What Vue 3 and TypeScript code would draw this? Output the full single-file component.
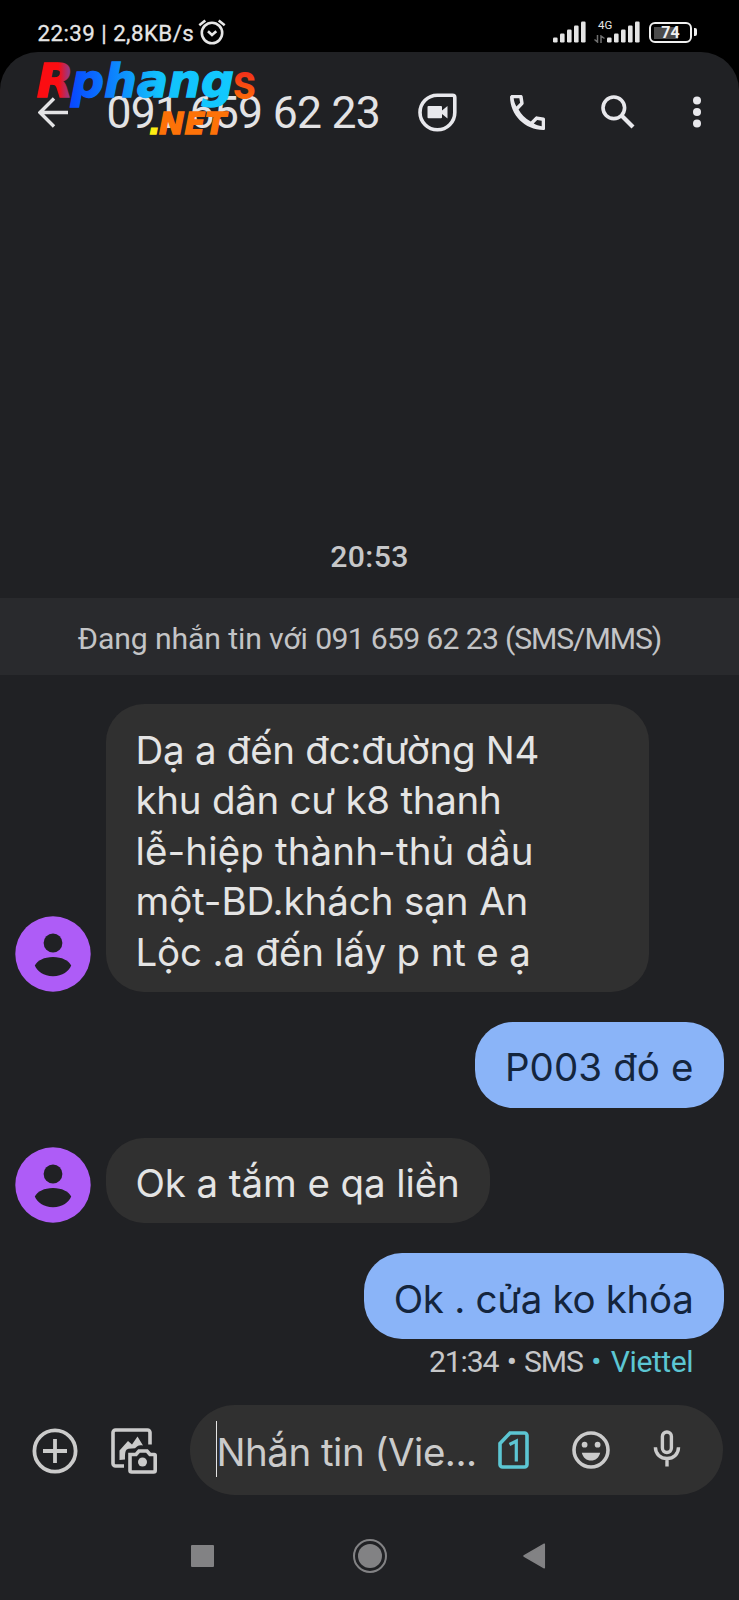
<script setup lang="ts">
interface Message {
  id: number
  from: 'them' | 'me'
  lines: { text: string; spacing: string }[]
}

const contact = '091 659 62 23'

const messages: Message[] = [
  {
    id: 1,
    from: 'them',
    lines: [
      { text: 'Dạ a đến đc:đường N4', spacing: 's1' },
      { text: 'khu dân cư k8 thanh', spacing: 's1' },
      { text: 'lễ-hiệp thành-thủ dầu', spacing: 's2' },
      { text: 'một-BD.khách sạn An', spacing: 's3' },
      { text: 'Lộc .a đến lấy p nt e ạ', spacing: 's4' },
    ],
  },
  { id: 2, from: 'me', lines: [{ text: 'P003 đó e', spacing: 's5' }] },
  { id: 3, from: 'them', lines: [{ text: 'Ok a tắm e qa liền', spacing: 's3' }] },
  { id: 4, from: 'me', lines: [{ text: 'Ok . cửa ko khóa', spacing: 's6' }] },
]

const bars = [0, 1, 2, 3, 4]
</script>

<template>
  <div class="phone">
    <header class="status">
      <span class="clock">22:39 | 2,8KB/s</span>
      <svg class="alarm" width="28" height="26" viewBox="0 0 28 26" fill="none" stroke="#e6e6e6" stroke-width="2.6">
        <circle cx="14" cy="14" r="10.2" />
        <path d="M1.3 6.3 7.3 1.6M26.7 6.3 20.7 1.6M10 12.3l4 3.7 4.3-3.7" />
      </svg>
      <svg class="signal" width="33" height="22" viewBox="0 0 33 22" fill="#e4e4e4">
        <rect v-for="b in bars" :key="b" :x="b * 7" :y="16.5 - b * 4" width="4.6" :height="5 + b * 4" rx="1.2" />
      </svg>
      <div class="network">
        <span>4G</span>
        <svg width="11" height="8" viewBox="0 0 11 8" fill="none" stroke="#6f6f6f" stroke-width="1.5">
          <path d="M.5 4.5 3.5 7V0M10.5 3.5 7 1v7" />
        </svg>
      </div>
      <svg class="signal-2" width="33" height="22" viewBox="0 0 33 22" fill="#e4e4e4">
        <rect v-for="b in bars" :key="b" :x="b * 7" :y="16.5 - b * 4" width="4.6" :height="5 + b * 4" rx="1.2" />
      </svg>
      <div class="battery"><span>74</span></div>
    </header>

    <main class="app">
      <nav class="toolbar">
        <svg class="back" width="31" height="31" viewBox="0 0 31 31" fill="none" stroke="#e3e3e5" stroke-width="3.4">
          <path d="M30 15.5H3M16 1.5l-14 14 14 14" />
        </svg>
        <h1>{{ contact }}</h1>
        <svg class="duo" width="39" height="39" viewBox="0 0 39 39">
          <path d="M19.3 2.2H34.5a2.3 2.3 0 0 1 2.3 2.3V19.5A17.4 17.3 0 1 1 19.3 2.2Z" fill="none" stroke="#e8e8ec" stroke-width="3.6" />
          <path d="M10.5 13h12.5a1 1 0 0 1 1 1v3.500l5.500-4.500v12.500L24 21v3.300a1 1 0 0 1-1 1h-12.500a1 1 0 0 1-1-1V14a1 1 0 0 1 1-1Z" fill="#e8e8ec" />
        </svg>
        <svg class="call" width="35" height="35" viewBox="3 3 18 18" fill="#e8e8ec">
          <path fill-rule="evenodd" d="M3.700 3H8.600C9.100 3 9.400 3.300 9.500 3.700L10 7C10.100 7.400 10 7.700 9.700 8L7.400 10.400A15 15 0 0 0 13.700 16.600L16 14.300C16.300 14 16.600 13.900 17 14L20.300 14.600C20.700 14.700 21 15 21 15.500V20.200C21 20.700 20.700 21 20.200 21C10.700 21 3 13.300 3 3.800ZM4.900 4.700C5 6.200 5.700 8 6.300 8.900L8.200 7L7.800 4.700ZM15.200 17.700C16.500 18.400 17.800 18.900 19.300 19.100V16.200L17 15.800Z" />
        </svg>
        <svg class="search" width="34" height="34" viewBox="0 0 34 34" fill="none" stroke="#e8e8ec" stroke-width="3.6">
          <circle cx="12.8" cy="12.8" r="10.8" />
          <path d="M20.5 20.5 32 32" stroke-width="4.2" />
        </svg>
        <svg class="more" width="10" height="32" viewBox="0 0 10 32" fill="#e8e8ec">
          <circle cx="5" cy="4.5" r="4" />
          <circle cx="5" cy="16" r="4" />
          <circle cx="5" cy="27.5" r="4" />
        </svg>
      </nav>

      <time class="day">20:53</time>
      <p class="banner">
        <span class="lead">Đang nhắn tin với&#32;</span><span class="number">{{ contact + ' ' }}</span><span class="kind">(SMS/MMS)</span>
      </p>

      <section class="thread">
        <article v-for="m in messages" :key="m.id" :class="['row', m.from]">
          <svg v-if="m.from === 'them'" class="avatar" width="76" height="76" viewBox="0 0 76 76">
            <circle cx="38" cy="38" r="37.7" fill="#ae5cf7" />
            <circle cx="38" cy="27" r="9.4" fill="#202124" />
            <path d="M19.8 49.5C22.5 44.5 29 41 38 41s15.5 3.5 18.2 8.5C54 55 47.5 60.2 38 60.2S22 55 19.8 49.5Z" fill="#202124" />
          </svg>
          <div class="bubble">
            <p v-for="l in m.lines" :key="l.text" :class="l.spacing">{{ l.text }}</p>
          </div>
        </article>
        <p class="meta">21:34 • SMS <span>• Viettel</span></p>
      </section>

      <section class="compose">
        <svg class="plus" width="46" height="46" viewBox="0 0 46 46" fill="none" stroke="#cbcbcb" stroke-width="3.8">
          <circle cx="23" cy="23" r="20.6" />
          <path d="M23 11v24M11 23h24" />
        </svg>
        <svg class="gallery" width="46" height="46" viewBox="0 0 46 46" fill="none" stroke="#cbcbcb" stroke-width="3.6">
          <path d="M13 38H4.500A2.500 2.500 0 0 1 2 35.500V4.500A2.500 2.500 0 0 1 4.500 2h32A2.500 2.500 0 0 1 39 4.500V16.500" />
          <path d="M8.500 32V22.500L17 13l4 3.500L26.500 8.500 32 17.500C27 16.500 26 19 24 20.200L17.500 20.700C14 21.500 14 25 14 31.500Z" fill="#cbcbcb" stroke="none" />
          <path d="M19 26.500h6l3-3.500h8l3 3.500h4.200a1 1 0 0 1 1 1V42.500a1.500 1.500 0 0 1-1.500 1.500H20.500a1.500 1.500 0 0 1-1.500-1.500Z" />
          <circle cx="31.5" cy="34" r="4.5" fill="#cbcbcb" stroke="none" />
        </svg>
        <div class="field">
          <i class="caret" />
          <span class="hint">Nhắn tin (Vie...</span>
          <svg class="sim" width="31" height="38" viewBox="0 0 31 38" fill="none" stroke="#5cc6d3" stroke-width="3.6">
            <path d="M12 2H26.500A2.500 2.500 0 0 1 29 4.500V33.500A2.500 2.500 0 0 1 26.500 36H4.500A2.500 2.500 0 0 1 2 33.500V12.500Z" />
            <path d="M11.500 13.500 18.300 10V30.500" stroke-width="3.2" />
          </svg>
          <svg class="emoji" width="38" height="38" viewBox="0 0 38 38" fill="#cbcbcb">
            <circle cx="19" cy="19" r="17" fill="none" stroke="#cbcbcb" stroke-width="3.6" />
            <circle cx="12.6" cy="13.7" r="2.9" />
            <circle cx="25.6" cy="13.7" r="2.9" />
            <path d="M9.800 21.800H28.200C27 26.800 23.500 29.600 19 29.600S11 26.800 9.800 21.800Z" />
          </svg>
          <svg class="mic" width="28" height="37" viewBox="0 0 28 37" fill="none" stroke="#cbcbcb" stroke-width="3.4">
            <rect x="9.4" y="2" width="9" height="20.5" rx="4.5" />
            <path d="M2.400 17.200C2.400 24 7.500 28.500 14 28.500S25.500 24 25.500 17.200M14 28.500V36.500" />
          </svg>
        </div>
      </section>

      <footer class="nav" aria-label="Navigation">
        <i class="recents" />
        <i class="home"><i /></i>
        <svg width="24" height="28" viewBox="0 0 24 28">
          <path d="M2 14 22.300 2.200V25.800Z" fill="#828284" stroke="#828284" stroke-width="1.5" stroke-linejoin="round" />
        </svg>
      </footer>
    </main>

    <svg class="watermark" width="230" height="90" viewBox="30 50 230 90">
      <defs>
        <linearGradient id="red" x1="0" x2="1">
          <stop offset=".6" stop-color="#fb0d12" />
          <stop offset="1" stop-color="#6a4cb8" />
        </linearGradient>
        <linearGradient id="blue" x1="0" x2="1">
          <stop offset="0" stop-color="#0748ff" />
          <stop offset=".55" stop-color="#12c3fb" />
          <stop offset="1" stop-color="#12c9ff" />
        </linearGradient>
        <linearGradient id="ember" x1="0" x2="0" y1="0" y2="1">
          <stop offset=".3" stop-color="#f02a1c" />
          <stop offset=".8" stop-color="#ff6a08" />
        </linearGradient>
      </defs>
      <g class="brand">
        <text x="36.5" y="96.5" textLength="37" lengthAdjust="spacingAndGlyphs" fill="url(#red)" stroke="url(#red)">R</text>
        <text x="71" y="96.5" textLength="163" lengthAdjust="spacingAndGlyphs" fill="url(#blue)" stroke="url(#blue)">phang</text>
        <text class="tail" x="233" y="98.5" textLength="23" lengthAdjust="spacingAndGlyphs" fill="url(#ember)">s</text>
        <text class="dot" x="149" y="133.5" fill="#ffee12" stroke="#ffee12">.</text>
        <text class="net" x="159" y="133.5" textLength="67" lengthAdjust="spacingAndGlyphs" fill="#fd7208" stroke="#fd7208">NET</text>
      </g>
    </svg>
  </div>
</template>

<style>
body {
  margin: 0;
  background: #000;
}
</style>

<style scoped>
.phone {
  position: relative;
  width: 739px;
  height: 1600px;
  overflow: hidden;
  background: #000;
  font-family: Roboto, "Noto Sans", sans-serif;
}

p,
h1 {
  margin: 0;
  font-weight: 400;
  white-space: nowrap;
}

svg {
  display: block;
  flex: none;
}

.status {
  display: flex;
  height: 52px;
  box-sizing: border-box;
  padding-top: 12px;
  align-items: center;
  color: #e6e6e6;
}

.clock {
  width: 160.5px;
  margin-left: 37.5px;
  padding-top: 2px;
  font-size: 22.3px;
  letter-spacing: 0.45px;
  white-space: nowrap;
  -webkit-text-stroke: 0.3px #e6e6e6;
}

.alarm {
  margin-bottom: 1px;
}

.signal {
  margin-left: 327px;
}

.network {
  display: flex;
  flex-direction: column;
  width: 17px;
  margin: 0 0 3px 8px;
  gap: 4px;
}

.network span {
  padding-left: 4px;
  font-size: 11.5px;
  line-height: 12px;
}

.signal-2 {
  margin-left: -4px;
}

.battery {
  position: relative;
  display: flex;
  width: 43px;
  height: 21px;
  margin: 1px 0 0 9px;
  box-sizing: border-box;
  align-items: center;
  justify-content: center;
  border: 2.5px solid #f0f0f0;
  border-radius: 6px;
  background: linear-gradient(#4b4b4b, #4b4b4b) 3px 50% / 24px 12px no-repeat;
  color: #f0f0f0;
  font-size: 16px;
  font-weight: 700;
}

.battery::after {
  content: "";
  position: absolute;
  top: 4px;
  right: -6.5px;
  width: 3px;
  height: 8px;
  border-radius: 0 2px 2px 0;
  background: #f0f0f0;
}

.app {
  display: flex;
  flex-direction: column;
  height: 1548px;
  border-radius: 38px 38px 0 0;
  background: #202124;
}

.toolbar {
  display: flex;
  height: 120px;
  align-items: center;
}

.back {
  margin-left: 38px;
}

.toolbar h1 {
  width: 273px;
  margin-left: 37.5px;
  padding-top: 1px;
  color: #e3e3e5;
  font-size: 44.5px;
  letter-spacing: -0.75px;
  line-height: 56px;
}

.duo {
  margin-left: 38px;
}

.call {
  margin-left: 53px;
}

.search {
  margin-left: 56px;
}

.more {
  margin-left: 57px;
}

.day {
  margin-top: 367px;
  color: #c6c7c9;
  font-size: 30.2px;
  font-weight: 500;
  letter-spacing: 0.4px;
  line-height: 36px;
  text-align: center;
}

.banner {
  height: 77px;
  margin-top: 23px;
  background: #292a2d;
  color: #c3c4c6;
  font-size: 30.2px;
  line-height: 81px;
  text-align: center;
}

.lead {
  letter-spacing: -0.12px;
}

.number {
  letter-spacing: -0.7px;
}

.kind {
  letter-spacing: -1.1px;
}

.thread {
  display: flex;
  flex-direction: column;
  gap: 30px;
  padding: 29px 15px 0;
}

.row {
  display: flex;
  align-items: flex-end;
  gap: 14.5px;
}

.row.me {
  justify-content: flex-end;
}

.bubble {
  box-sizing: border-box;
  min-height: 85.7px;
  padding: 20.5px 30px 14.5px 30px;
  border-radius: 38px;
  background: #303030;
  color: #e4e4e4;
  font-family: Inter, "Noto Sans", sans-serif;
  font-size: 38.5px;
  line-height: 50.6px;
}

.me .bubble {
  padding-right: 30.5px;
  background: #8ab4f8;
  color: #14253d;
}

.them:first-child .bubble {
  width: 543px;
}

.s1 {
  letter-spacing: -0.27px;
}

.s2 {
  letter-spacing: 0.13px;
}

.s3 {
  letter-spacing: -0.1px;
}

.s4 {
  letter-spacing: -0.17px;
}

.s5 {
  letter-spacing: 0.1px;
}

.s6 {
  letter-spacing: -0.31px;
}

.meta {
  margin: -25px 31px 0 0;
  color: #c6c7c9;
  font-size: 30.2px;
  letter-spacing: -1.15px;
  word-spacing: 2px;
  line-height: 36px;
  text-align: right;
}

.meta span {
  color: #5cc6d3;
  letter-spacing: -0.5px;
  word-spacing: 3px;
}

.compose {
  display: flex;
  align-items: center;
  height: 90px;
  margin-top: auto;
}

.plus {
  margin: 2px 0 0 31.5px;
}

.gallery {
  margin: 3px 0 0 33px;
}

.field {
  display: flex;
  align-items: center;
  width: 533px;
  height: 90px;
  margin-left: 33px;
  border-radius: 45px;
  background: #303030;
}

.caret {
  width: 1px;
  height: 56px;
  margin: -1px 0 0 26px;
  background: #e4e4e4;
}

.hint {
  width: 281.5px;
  padding-top: 4px;
  color: #cbcbcb;
  font-family: Inter, "Noto Sans", sans-serif;
  font-size: 38.5px;
  letter-spacing: -0.5px;
  line-height: 50px;
  white-space: nowrap;
}

.emoji {
  margin-left: 42.5px;
}

.mic {
  margin: -3px 0 0 43px;
}

.nav {
  display: flex;
  align-items: center;
  height: 88px;
  margin-top: 17.5px;
}

.recents {
  width: 22.5px;
  height: 22.5px;
  margin-left: 191px;
  border-radius: 1px;
  background: #828284;
}

.home {
  display: grid;
  width: 34px;
  height: 34px;
  margin-left: 139px;
  box-sizing: border-box;
  place-items: center;
  border: 2px solid #828284;
  border-radius: 50%;
}

.home i {
  width: 24px;
  height: 24px;
  border-radius: 50%;
  background: #828284;
}

.nav svg {
  margin-left: 135.5px;
}

.watermark {
  position: absolute;
  top: 50px;
  left: 30px;
  overflow: visible;
}

.brand {
  font-family: "DejaVu Sans", sans-serif;
  font-size: 47px;
  font-style: italic;
  font-weight: 700;
  stroke-width: 1.4px;
}

.brand .tail {
  font-family: Roboto, sans-serif;
  font-size: 50px;
  font-style: normal;
}

.brand .dot,
.brand .net {
  font-size: 31px;
}
</style>
